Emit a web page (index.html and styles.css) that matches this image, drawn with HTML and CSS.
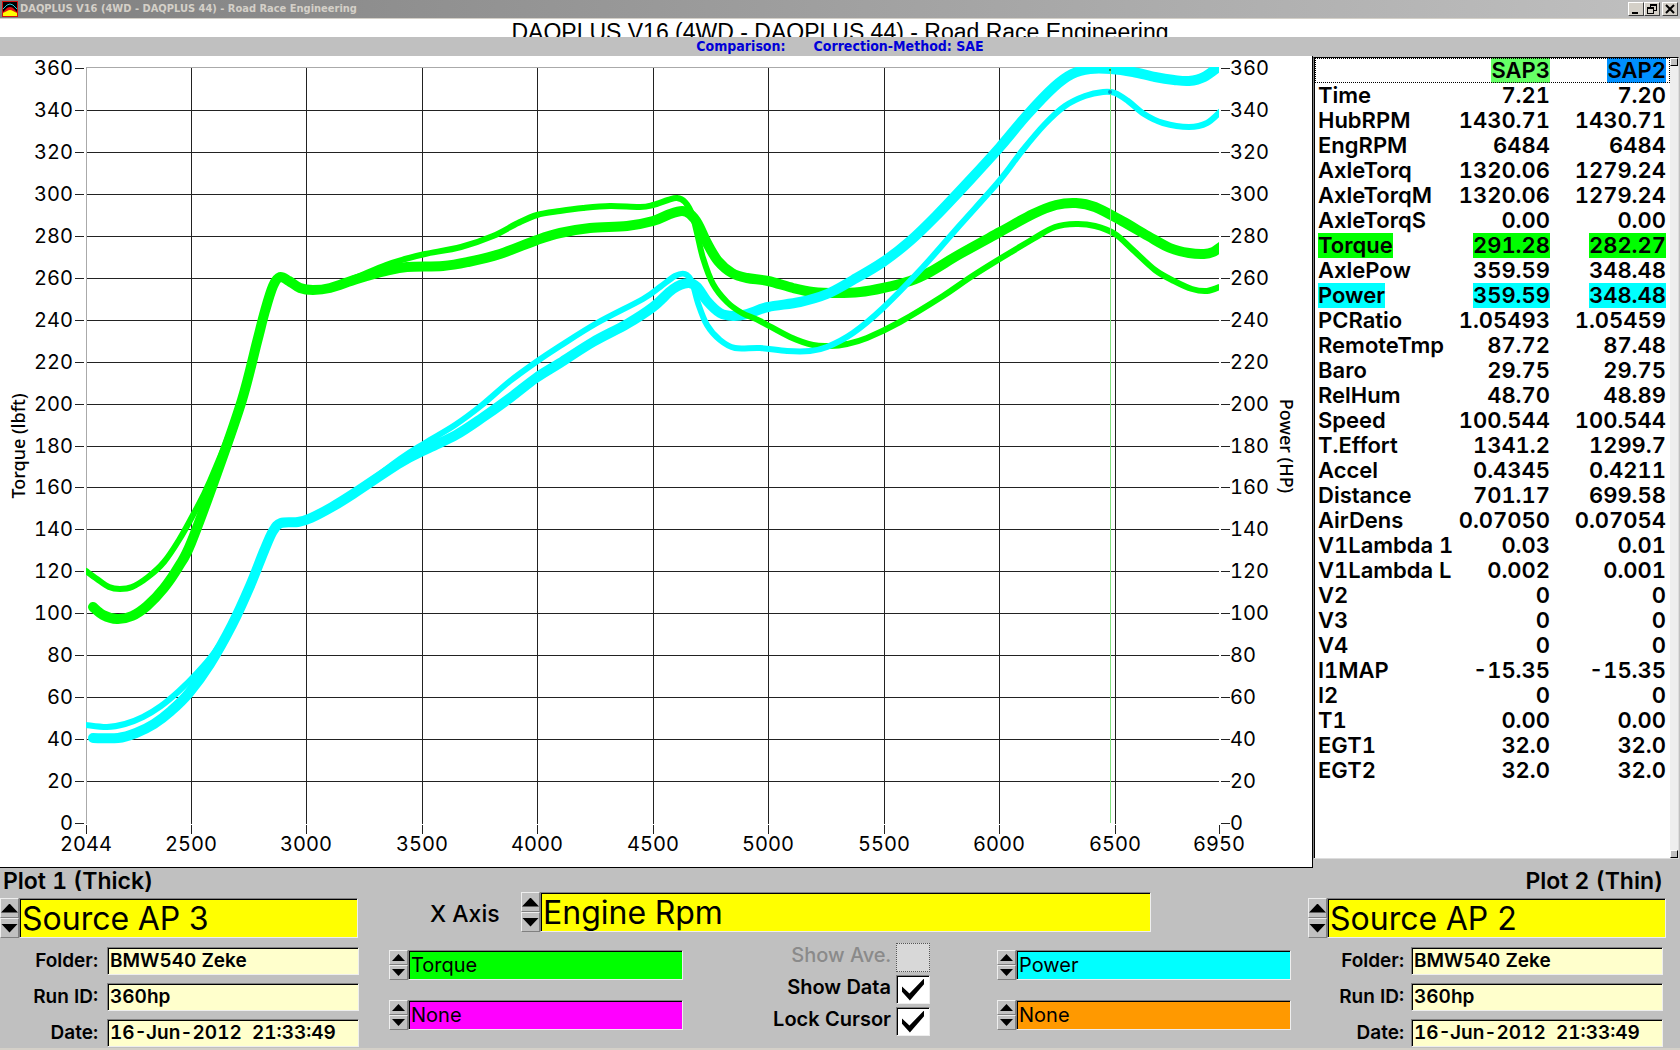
FILE: index.html
```html
<!DOCTYPE html>
<html lang="en">
<head>
    <meta charset="utf-8">
    <title>DAQPLUS V16 (4WD - DAQPLUS 44) - Road Race Engineering</title>
    <link rel="stylesheet" href="styles.css">
</head>
<body>
    <header class="titlebar">
        <svg class="app-icon" viewBox="0 0 16 16">
            <rect width="16" height="16" fill="#d01010"/>
            <rect x="1" y="1" width="14" height="14" fill="#000"/>
            <path d="M1 8 L5 4 Q8 2 11 4 L15 8" fill="none" stroke="#20d0e0"/>
            <path d="M1 15 V11 L5 7 Q8 5 11 7 L15 11 V15 Z" fill="#e01010"/>
            <path d="M1 15 V12 L5 10 Q8 8 11 10 L15 12 V15 Z" fill="#ff0"/>
        </svg>
        <span class="titlebar-text">DAQPLUS V16 (4WD - DAQPLUS 44) - Road Race Engineering</span>
        <div class="window-buttons">
            <button aria-label="Minimize"><svg viewBox="0 0 12 10"><path d="M2 8h6v2H2z"/></svg></button>
            <button aria-label="Restore"><svg viewBox="0 0 12 10"><path d="M4 0h7v7H8v3H1V3h3zM5 2v1h3v3h2V2zM2 5v4h5V5z" fill-rule="evenodd"/></svg></button>
            <button class="close" aria-label="Close"><svg viewBox="0 0 12 10"><path d="M2 1l8 8M10 1L2 9" stroke="#000" stroke-width="2"/></svg></button>
        </div>
    </header>
    <h1 class="page-title">DAQPLUS V16 (4WD - DAQPLUS 44) - Road Race Engineering</h1>
    <div class="subtitle"><span>Comparison:</span><span>Correction-Method: SAE</span></div>

    <main class="main">
        <section class="chart-panel">
            <svg id="chart" class="chart" viewBox="0 56 1312 811">
                <defs>
                    <clipPath id="plot-area"><rect x="86" y="67" width="1133" height="757"/></clipPath>
                </defs>
                <g id="grid" class="grid"></g>
                <g id="labels" class="axis-labels"></g>
                <path class="frame" d="M86 824V67H1219"/>
                <g id="curves" clip-path="url(#plot-area)"></g>
                <path class="cursor" d="M1110 68V823"/>
                <circle cx="1110" cy="70" r="1" fill="#082"/>
                <circle cx="1110" cy="92" r="2" fill="#09c"/>
                <text class="axis-title" transform="translate(25 446) rotate(-90)">Torque (lbft)</text>
                <text class="axis-title" transform="translate(1280 446) rotate(90)">Power (HP)</text>
            </svg>
        </section>

        <section class="data-panel">
            <table class="data">
                <thead>
                    <tr><th></th><th><span class="sap3">SAP3</span></th><th><span class="sap2">SAP2</span></th></tr>
                </thead>
                <tbody>
                    <tr><td>Time</td><td>7.21</td><td>7.20</td></tr>
                    <tr><td>HubRPM</td><td>1430.71</td><td>1430.71</td></tr>
                    <tr><td>EngRPM</td><td>6484</td><td>6484</td></tr>
                    <tr><td>AxleTorq</td><td>1320.06</td><td>1279.24</td></tr>
                    <tr><td>AxleTorqM</td><td>1320.06</td><td>1279.24</td></tr>
                    <tr><td>AxleTorqS</td><td>0.00</td><td>0.00</td></tr>
                    <tr class="green"><td><span>Torque</span></td><td><span>291.28</span></td><td><span>282.27</span></td></tr>
                    <tr><td>AxlePow</td><td>359.59</td><td>348.48</td></tr>
                    <tr class="cyan"><td><span>Power</span></td><td><span>359.59</span></td><td><span>348.48</span></td></tr>
                    <tr><td>PCRatio</td><td>1.05493</td><td>1.05459</td></tr>
                    <tr><td>RemoteTmp</td><td>87.72</td><td>87.48</td></tr>
                    <tr><td>Baro</td><td>29.75</td><td>29.75</td></tr>
                    <tr><td>RelHum</td><td>48.70</td><td>48.89</td></tr>
                    <tr><td>Speed</td><td>100.544</td><td>100.544</td></tr>
                    <tr><td>T.Effort</td><td>1341.2</td><td>1299.7</td></tr>
                    <tr><td>Accel</td><td>0.4345</td><td>0.4211</td></tr>
                    <tr><td>Distance</td><td>701.17</td><td>699.58</td></tr>
                    <tr><td>AirDens</td><td>0.07050</td><td>0.07054</td></tr>
                    <tr><td>V1Lambda 1</td><td>0.03</td><td>0.01</td></tr>
                    <tr><td>V1Lambda L</td><td>0.002</td><td>0.001</td></tr>
                    <tr><td>V2</td><td>0</td><td>0</td></tr>
                    <tr><td>V3</td><td>0</td><td>0</td></tr>
                    <tr><td>V4</td><td>0</td><td>0</td></tr>
                    <tr><td>I1MAP</td><td>-15.35</td><td>-15.35</td></tr>
                    <tr><td>I2</td><td>0</td><td>0</td></tr>
                    <tr><td>T1</td><td>0.00</td><td>0.00</td></tr>
                    <tr><td>EGT1</td><td>32.0</td><td>32.0</td></tr>
                    <tr><td>EGT2</td><td>32.0</td><td>32.0</td></tr>
                </tbody>
            </table>
            <div class="scrollbar">
                <button aria-label="Scroll up"></button>
                <button aria-label="Scroll down"></button>
            </div>
        </section>
    </main>

    <footer class="controls">
        <section class="source">
            <label class="plot-name" for="plot1">Plot 1 (Thick)</label>
            <div class="ring large yellow">
                <div class="spin"><button aria-label="Previous"></button><button aria-label="Next"></button></div>
                <select id="plot1"><option>Source AP 3</option></select>
            </div>
            <div class="info">
                <label for="folder1">Folder:</label><input id="folder1" type="text" value="BMW540 Zeke">
                <label for="run1">Run ID:</label><input id="run1" type="text" value="360hp">
                <label for="date1">Date:</label><input id="date1" type="text" value="16-Jun-2012  21:33:49">
            </div>
        </section>

        <section class="axes">
            <div class="x-axis">
                <label for="xaxis">X Axis</label>
                <div class="ring large yellow">
                    <div class="spin"><button aria-label="Previous"></button><button aria-label="Next"></button></div>
                    <select id="xaxis"><option>Engine Rpm</option></select>
                </div>
            </div>
            <div class="channels">
                <div class="pair">
                    <div class="ring green">
                        <div class="spin"><button aria-label="Previous"></button><button aria-label="Next"></button></div>
                        <select aria-label="Left channel 1"><option>Torque</option></select>
                    </div>
                    <div class="ring magenta">
                        <div class="spin"><button aria-label="Previous"></button><button aria-label="Next"></button></div>
                        <select aria-label="Left channel 2"><option>None</option></select>
                    </div>
                </div>
                <div class="checks">
                    <label class="disabled">Show Ave. <input type="checkbox" disabled></label>
                    <label>Show Data <input type="checkbox" checked></label>
                    <label>Lock Cursor <input type="checkbox" checked></label>
                </div>
                <div class="pair">
                    <div class="ring cyan">
                        <div class="spin"><button aria-label="Previous"></button><button aria-label="Next"></button></div>
                        <select aria-label="Right channel 1"><option>Power</option></select>
                    </div>
                    <div class="ring orange">
                        <div class="spin"><button aria-label="Previous"></button><button aria-label="Next"></button></div>
                        <select aria-label="Right channel 2"><option>None</option></select>
                    </div>
                </div>
            </div>
        </section>

        <section class="source right">
            <label class="plot-name" for="plot2">Plot 2 (Thin)</label>
            <div class="ring large yellow">
                <div class="spin"><button aria-label="Previous"></button><button aria-label="Next"></button></div>
                <select id="plot2"><option>Source AP 2</option></select>
            </div>
            <div class="info">
                <label for="folder2">Folder:</label><input id="folder2" type="text" value="BMW540 Zeke">
                <label for="run2">Run ID:</label><input id="run2" type="text" value="360hp">
                <label for="date2">Date:</label><input id="date2" type="text" value="16-Jun-2012  21:33:49">
            </div>
        </section>
    </footer>

    <script src="chart.js"></script>
</body>
</html>
```
FILE: styles.css
```css
* {
    box-sizing: border-box;
}

body {
    margin: 0;
    min-height: 100vh;
    display: flex;
    flex-direction: column;
    background: #c0c0c0;
    color: #000;
    font-family: Inter, "Liberation Sans", sans-serif;
    font-variant-numeric: tabular-nums;
    border-bottom: 2px solid #d4d0c8;
}

button, input, select {
    font: inherit;
    color: inherit;
    margin: 0;
    padding: 0;
    border-radius: 0;
}

/* title bar */
.titlebar {
    display: flex;
    align-items: center;
    height: 19px;
    padding: 0 2px;
    background: linear-gradient(to right, #808080, #c0c0c0);
    border-bottom: 1px solid #d4d0c8;
}

.app-icon {
    width: 16px;
    height: 16px;
}

.titlebar-text {
    flex: 1;
    padding-left: 2px;
    color: #d4d0c8;
    font: bold 11px/18px "DejaVu Sans Condensed", "DejaVu Sans", sans-serif;
}

.window-buttons {
    display: flex;
}

.window-buttons button {
    width: 16px;
    height: 14px;
    background: #d4d0c8;
    border: 1px solid;
    border-color: #fff #404040 #404040 #fff;
    line-height: 0;
}

.window-buttons .close {
    margin-left: 2px;
}

.window-buttons svg {
    width: 12px;
    height: 10px;
}

.page-title {
    margin: 0;
    height: 18px;
    overflow: hidden;
    background: #fff;
    text-align: center;
    font: 23px/26px "Liberation Sans", Arial, sans-serif;
}

.subtitle {
    display: flex;
    justify-content: center;
    gap: 28px;
    height: 19px;
    color: #0000d8;
    font: bold 14px/18px "DejaVu Sans Condensed", "DejaVu Sans", sans-serif;
}

/* chart and data list */
.main {
    flex: 1;
    display: grid;
    grid-template-columns: 1fr 367px;
}

.chart-panel {
    background: #fff;
    border-right: 1px solid #000;
    border-bottom: 1px solid #000;
}

.chart {
    display: block;
    width: 100%;
}

.grid {
    stroke: #222;
    shape-rendering: crispEdges;
}

.frame {
    fill: none;
    stroke: #aaa;
    shape-rendering: crispEdges;
}

.cursor {
    stroke: #80e080;
    shape-rendering: crispEdges;
}

.curve {
    fill: none;
    stroke-linecap: round;
    stroke-linejoin: round;
}

.axis-labels {
    font-size: 20px;
}

.axis-title {
    font: 500 18px "Noto Sans", sans-serif;
    text-anchor: middle;
}

.data-panel {
    display: flex;
    align-items: stretch;
    margin: 1px 1px 9px 0;
    background: #fff;
    border: 1px solid;
    border-color: #000 #ddd #ddd #808080;
    box-shadow: inset 1px 0 #000;
}

.data {
    flex: 1;
    align-self: flex-start;
    margin-left: 1px;
    border-collapse: collapse;
    font-size: 22px;
    font-weight: 600;
    line-height: 25px;
    white-space: nowrap;
}

.data th, .data td {
    height: 25px;
    padding: 0 4px 0 0;
    text-align: right;
    font-weight: inherit;
}

.data td:first-child {
    padding: 0 0 0 3px;
    text-align: left;
}

.data th:last-child, .data td:last-child {
    width: 116px;
}

.data thead tr {
    outline: 1px dotted #000;
    outline-offset: -1px;
}

.data span {
    display: inline-block;
    height: 25px;
    vertical-align: top;
}

.sap3 {
    background: #66ff66;
}

.sap2 {
    background: #0090ff;
}

.data .green span {
    background: #0f0;
}

.data .cyan span {
    background: #0ff;
}

.scrollbar {
    display: flex;
    flex-direction: column;
    justify-content: space-between;
    width: 8px;
    background: #eee;
}

.scrollbar button {
    width: 8px;
    height: 8px;
    background: #c0c0c0;
    border: 1px solid;
    border-color: #fff #000 #000 #fff;
}

/* bottom controls */
.controls {
    display: grid;
    grid-template-columns: 358px 1fr 358px;
    padding-right: 14px;
    height: 180px;
}

.source {
    display: flex;
    flex-direction: column;
}

.plot-name {
    padding: 0 3px;
    font-size: 23px;
    font-weight: 600;
    line-height: 26px;
    margin-bottom: 4px;
}

.right .plot-name {
    text-align: right;
}

.ring {
    display: flex;
    height: 30px;
    font-size: 20px;
}

.ring.large {
    height: 40px;
    font-size: 32px;
}

.ring select, .info input {
    flex: 1;
    min-width: 0;
    appearance: none;
    outline: none;
    padding-left: 2px;
    border: 1px solid;
    border-color: #808080 #eee #eee #808080;
    box-shadow: inset 1px 1px #000;
}

.yellow select {
    background: #ff0;
}

.green select {
    background: #0f0;
}

.magenta select {
    background: #f0f;
}

.cyan select {
    background: #0ff;
}

.orange select {
    background: #ff9900;
}

.spin {
    display: flex;
    flex-direction: column;
    width: 19px;
}

.spin button {
    flex: 1;
    display: flex;
    align-items: center;
    justify-content: center;
    background: #c0c0c0;
    border: 1px solid;
    border-color: #eee #808080 #808080 #eee;
}

.spin button::before {
    content: "";
    width: 13px;
    height: 7px;
    background: #000;
    clip-path: polygon(50% 0, 100% 100%, 0 100%);
}

.spin button:last-child::before {
    clip-path: polygon(0 0, 100% 0, 50% 100%);
}

.large .spin button::before {
    width: 17px;
    height: 9px;
}

.info {
    display: grid;
    grid-template-columns: 98px 252px;
    column-gap: 9px;
    row-gap: 8px;
    align-items: center;
    margin-top: 9px;
    font-size: 19px;
    font-weight: 600;
    line-height: 28px;
}

.right .info {
    grid-template-columns: 96px 252px;
    column-gap: 7px;
}

.info label {
    text-align: right;
}

.info input {
    height: 28px;
    padding-left: 2px;
    background: #ffffcc;
}

.axes {
    padding: 24px 17px 0 31px;
}

.x-axis {
    display: grid;
    grid-template-columns: 76px 1fr;
    align-items: center;
    gap: 15px;
    padding: 0 140px 0 41px;
    font-size: 23px;
    font-weight: 500;
}

.x-axis label {
    padding-top: 4px;
}

.x-axis .ring {
    font-weight: 400;
}

.channels {
    display: grid;
    grid-template-columns: 294px 1fr 294px;
    margin-top: 11px;
}

.pair {
    display: flex;
    flex-direction: column;
    gap: 20px;
    padding-top: 7px;
}

.checks {
    display: flex;
    flex-direction: column;
    gap: 3px;
    padding-right: 67px;
    font-size: 20px;
    line-height: 24px;
    font-weight: 600;
}

.checks label {
    display: flex;
    align-items: flex-start;
    justify-content: flex-end;
    gap: 5px;
}

.checks .disabled {
    color: #8a8a8a;
    font-weight: 500;
}

.checks input {
    appearance: none;
    display: grid;
    place-items: center;
    width: 34px;
    height: 29px;
    background: #fff;
    border: 1px solid;
    border-color: #808080 #eee #eee #808080;
    box-shadow: inset 1px 1px #000;
}

.checks input:disabled {
    background: #d8d8d8;
    border: 1px dotted #555;
    box-shadow: none;
}

.checks input:checked::before {
    content: "";
    width: 22px;
    height: 22px;
    background: #000;
    clip-path: polygon(0 36%, 34% 68%, 100% 0, 100% 26%, 36% 100%, 0 60%);
}
```
FILE: chart.js
```js
const SVG = 'http://www.w3.org/2000/svg';
const grid = document.getElementById('grid');
const labels = document.getElementById('labels');

const xPos = rpm => Math.floor(86 + (rpm - 2044) * 1133 / 4906);
const yPos = value => Math.round(823 - value * 755 / 360);

function add(parent, tag, attrs, text) {
    const el = document.createElementNS(SVG, tag);
    for (const key in attrs) el.setAttribute(key, attrs[key]);
    if (text !== undefined) el.textContent = text;
    parent.appendChild(el);
}

for (let v = 0; v <= 360; v += 20) {
    const y = yPos(v);
    if (v > 0 && v < 360) add(grid, 'path', { d: `M86 ${y}H1219` });
    add(grid, 'path', { d: `M75 ${y}h9M1221 ${y}h9` });
    add(labels, 'text', { x: 73, y: y + 7, 'text-anchor': 'end' }, v);
    add(labels, 'text', { x: 1230, y: y + 7 }, v);
}

[2044, 2500, 3000, 3500, 4000, 4500, 5000, 5500, 6000, 6500, 6950].forEach(rpm => {
    const x = xPos(rpm);
    if (rpm % 500 === 0) add(grid, 'path', { d: `M${x} 68V824` });
    add(grid, 'path', { d: `M${x} 825v9` });
    add(labels, 'text', { x: x, y: 851, 'text-anchor': 'middle' }, rpm);
});

// the traces, drawn bottom to top
const curves = [
    { color: '#0f0', width: 10, points: '93,607 103,615 117,619 132,616 147,606 164,588 179,566 191,543 217,473 242,400 257,342 265,311 273,286 280,277 289,281 300,288 313,290 330,288 357,279 386,271 407,267 443,266 468,262 500,254 537,240 560,233 590,228 627,226 653,221 670,214 682,211 690,214 698,224 707,243 718,261 732,273 747,278 768,281 793,288 813,292 837,293 860,292 883,288 910,281 930,272 960,254 1000,232 1033,214 1056,205 1076,203 1095,207 1122,221 1148,236 1170,248 1189,253 1204,254 1213,252 1222,246' },
    { color: '#0ff', width: 10, points: '93,738 118,738 136,733 154,724 171,711 189,693 210,664 232,625 250,586 264,551 273,531 281,523 298,522 311,518 332,507 353,494 400,463 429,448 456,435 482,418 510,398 536,378 560,363 593,342 627,324 653,307 673,289 688,283 697,287 707,301 720,313 733,316 747,314 768,307 800,302 827,294 853,280 883,262 910,241 936,216 970,180 1000,147 1027,115 1054,87 1072,74 1090,69 1111,69 1133,72 1155,77 1174,80 1189,81 1204,77 1222,64' },
    { color: '#0f0', width: 6, points: '86,571 97,579 109,587 120,589 132,587 148,577 164,562 179,540 193,515 210,481 242,400 257,342 265,311 273,286 280,277 289,281 300,288 313,290 330,288 357,277 386,265 405,259 425,254 461,247 493,236 518,223 537,215 560,211 583,208 610,206 640,207 653,205 668,200 677,198 685,202 692,214 697,233 703,258 713,284 727,302 742,313 760,321 790,337 813,345 830,346 847,344 867,338 900,322 943,296 977,273 1033,239 1055,227 1076,224 1095,226 1115,234 1133,250 1155,270 1174,281 1192,289 1207,291 1222,286' },
    { color: '#0ff', width: 6, points: '86,725 107,727 125,724 143,717 161,706 179,691 197,673 214,653 232,625 250,586 264,551 273,531 281,523 298,522 311,518 332,507 353,494 400,459 425,443 455,425 482,405 510,381 536,362 560,346 597,323 643,299 660,287 675,276 685,274 692,282 698,303 707,325 720,340 735,348 760,348 787,351 810,351 827,347 853,333 883,308 923,267 960,225 1000,180 1022,151 1045,124 1065,106 1085,96 1103,92 1115,93 1128,101 1144,114 1163,123 1189,127 1207,123 1222,110' }
];

// smooth line through the points (Catmull-Rom to bezier)
function toPath(points) {
    let d = `M${points[0]}`;
    for (let i = 0; i < points.length - 1; i++) {
        const p0 = points[i - 1] || points[i];
        const p1 = points[i];
        const p2 = points[i + 1];
        const p3 = points[i + 2] || p2;
        const c1 = [p1[0] + (p2[0] - p0[0]) / 6, p1[1] + (p2[1] - p0[1]) / 6];
        const c2 = [p2[0] - (p3[0] - p1[0]) / 6, p2[1] - (p3[1] - p1[1]) / 6];
        d += `C${c1} ${c2} ${p2}`;
    }
    return d;
}

curves.forEach(c => {
    const points = c.points.split(' ').map(p => p.split(',').map(Number));
    add(document.getElementById('curves'), 'path', {
        class: 'curve', d: toPath(points), stroke: c.color, 'stroke-width': c.width
    });
});
```
